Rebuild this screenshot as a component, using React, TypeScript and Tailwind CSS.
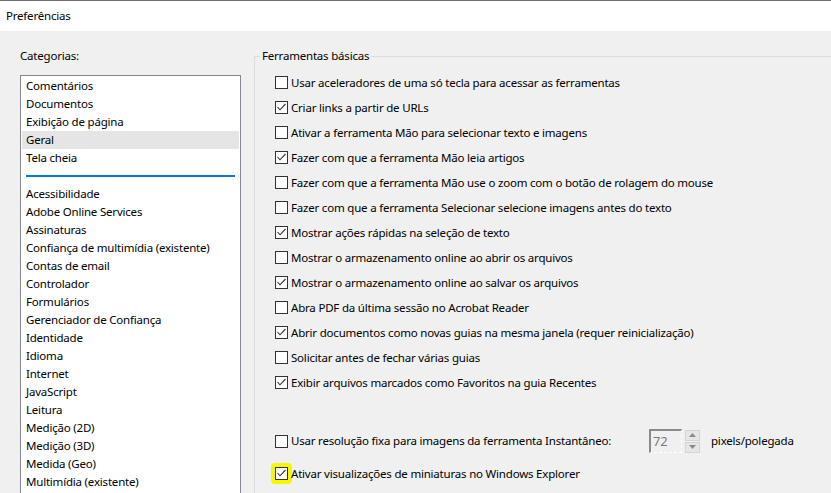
import React from 'react'

const categoriesTop = ['Comentários', 'Documentos', 'Exibição de página', 'Geral', 'Tela cheia']

const categoriesBottom = [
	'Acessibilidade',
	'Adobe Online Services',
	'Assinaturas',
	'Confiança de multimídia (existente)',
	'Contas de email',
	'Controlador',
	'Formulários',
	'Gerenciador de Confiança',
	'Identidade',
	'Idioma',
	'Internet',
	'JavaScript',
	'Leitura',
	'Medição (2D)',
	'Medição (3D)',
	'Medida (Geo)',
	'Multimídia (existente)',
]

const options: [string, boolean][] = [
	['Usar aceleradores de uma só tecla para acessar as ferramentas', false],
	['Criar links a partir de URLs', true],
	['Ativar a ferramenta Mão para selecionar texto e imagens', false],
	['Fazer com que a ferramenta Mão leia artigos', true],
	['Fazer com que a ferramenta Mão use o zoom com o botão de rolagem do mouse', false],
	['Fazer com que a ferramenta Selecionar selecione imagens antes do texto', false],
	['Mostrar ações rápidas na seleção de texto', true],
	['Mostrar o armazenamento online ao abrir os arquivos', false],
	['Mostrar o armazenamento online ao salvar os arquivos', true],
	['Abra PDF da última sessão no Acrobat Reader', false],
	['Abrir documentos como novas guias na mesma janela (requer reinicialização)', true],
	['Solicitar antes de fechar várias guias', false],
	['Exibir arquivos marcados como Favoritos na guia Recentes', true],
]

function Checkbox({ checked }: { checked: boolean }) {
	return (
		<span className="w-[13px] h-[13px] shrink-0 border border-[#333333] bg-white flex items-center justify-center">
			{checked && (
				<svg width="11" height="11" viewBox="0 0 11 11">
					<polyline points="1.5,5 4,7.8 9.5,2" fill="none" stroke="#333333" strokeWidth="1.1" />
				</svg>
			)}
		</span>
	)
}

function Option({ label, checked }: { label: string; checked: boolean }) {
	return (
		<div className="h-[25px] flex items-center gap-[3px]">
			<Checkbox checked={checked} />
			<span className="whitespace-nowrap">{label}</span>
		</div>
	)
}

function Spinner() {
	return (
		<div className="flex items-center gap-[3px]">
			<div className="w-[33px] h-[24px] bg-[#f0f0f0] border-t-2 border-l-2 border-t-[#8a8a8a] border-l-[#8a8a8a] border-b border-r border-dashed [border-top-style:solid] [border-left-style:solid] border-b-white border-r-white pl-[2px] text-[#7a7a7a] text-[13px] leading-[20px]">
				72
			</div>
			<div className="flex flex-col gap-[1px]">
				<span className="w-[15px] h-[11px] bg-[#e6e6e6] border border-[#d4d4d4] flex items-center justify-center">
					<svg width="7" height="4" viewBox="0 0 7 4">
						<polygon points="0,4 7,4 3.5,0" fill="#8a8a8a" />
					</svg>
				</span>
				<span className="w-[15px] h-[11px] bg-[#e6e6e6] border border-[#d4d4d4] flex items-center justify-center">
					<svg width="7" height="4" viewBox="0 0 7 4">
						<polygon points="0,0 7,0 3.5,4" fill="#8a8a8a" />
					</svg>
				</span>
			</div>
		</div>
	)
}

export default function App() {
	return (
		<div className="w-[831px] h-[493px] overflow-hidden bg-[#f0f0f0] text-black text-[11.5px] tracking-[-0.2px] leading-[18px] font-['Noto_Sans',sans-serif] flex flex-col">
			{/* Title */}
			<div className="h-[31px] shrink-0 bg-white border-t border-[#707070] pl-[6px] flex items-center">
				Preferências
			</div>

			<div className="flex flex-1 min-h-0">
				{/* Categories */}
				<div className="w-[254px] shrink-0 pl-[20px] pt-[16px] flex flex-col">
					<div className="mb-[10px]">Categorias:</div>
					<div className="w-[221px] flex-1 border-l border-t border-r border-[#828790] bg-white px-[1px] pt-[1px]">
						{categoriesTop.map((c) => (
							<div key={c} className={`h-[18px] pl-[4px] whitespace-nowrap ${c === 'Geral' ? 'bg-[#e5e5e5]' : ''}`}>
								{c}
							</div>
						))}
						<div className="h-[18px] flex items-center px-[4px]">
							<div className="h-[2px] w-full bg-[#0078d7]" />
						</div>
						{categoriesBottom.map((c) => (
							<div key={c} className="h-[18px] pl-[4px] whitespace-nowrap">
								{c}
							</div>
						))}
					</div>
				</div>

				{/* Preferences */}
				<div className="flex-1 pt-[16px] flex flex-col">
					<fieldset className="border-l border-t border-[#dcdcdc] pl-[20px] pt-[5px] flex-1">
						<legend className="-ml-[15px] px-[2px]">Ferramentas básicas</legend>
						{options.map(([label, checked]) => (
							<Option key={label} label={label} checked={checked} />
						))}

						<div className="mt-[34px] h-[24px] flex items-center">
							<Checkbox checked={false} />
							<span className="ml-[3px] w-[358px] whitespace-nowrap">
								Usar resolução fixa para imagens da ferramenta Instantâneo:
							</span>
							<Spinner />
							<span className="ml-[11px]">pixels/polegada</span>
						</div>

						<div className="mt-[8px] h-[25px] flex items-center gap-[3px]">
							<span className="-ml-[4px] -my-[4px] p-[4px] bg-[#f7f700] rounded-[4px]">
								<Checkbox checked />
							</span>
							<span className="-ml-[4px] whitespace-nowrap">Ativar visualizações de miniaturas no Windows Explorer</span>
						</div>
					</fieldset>
				</div>
			</div>
		</div>
	)
}
